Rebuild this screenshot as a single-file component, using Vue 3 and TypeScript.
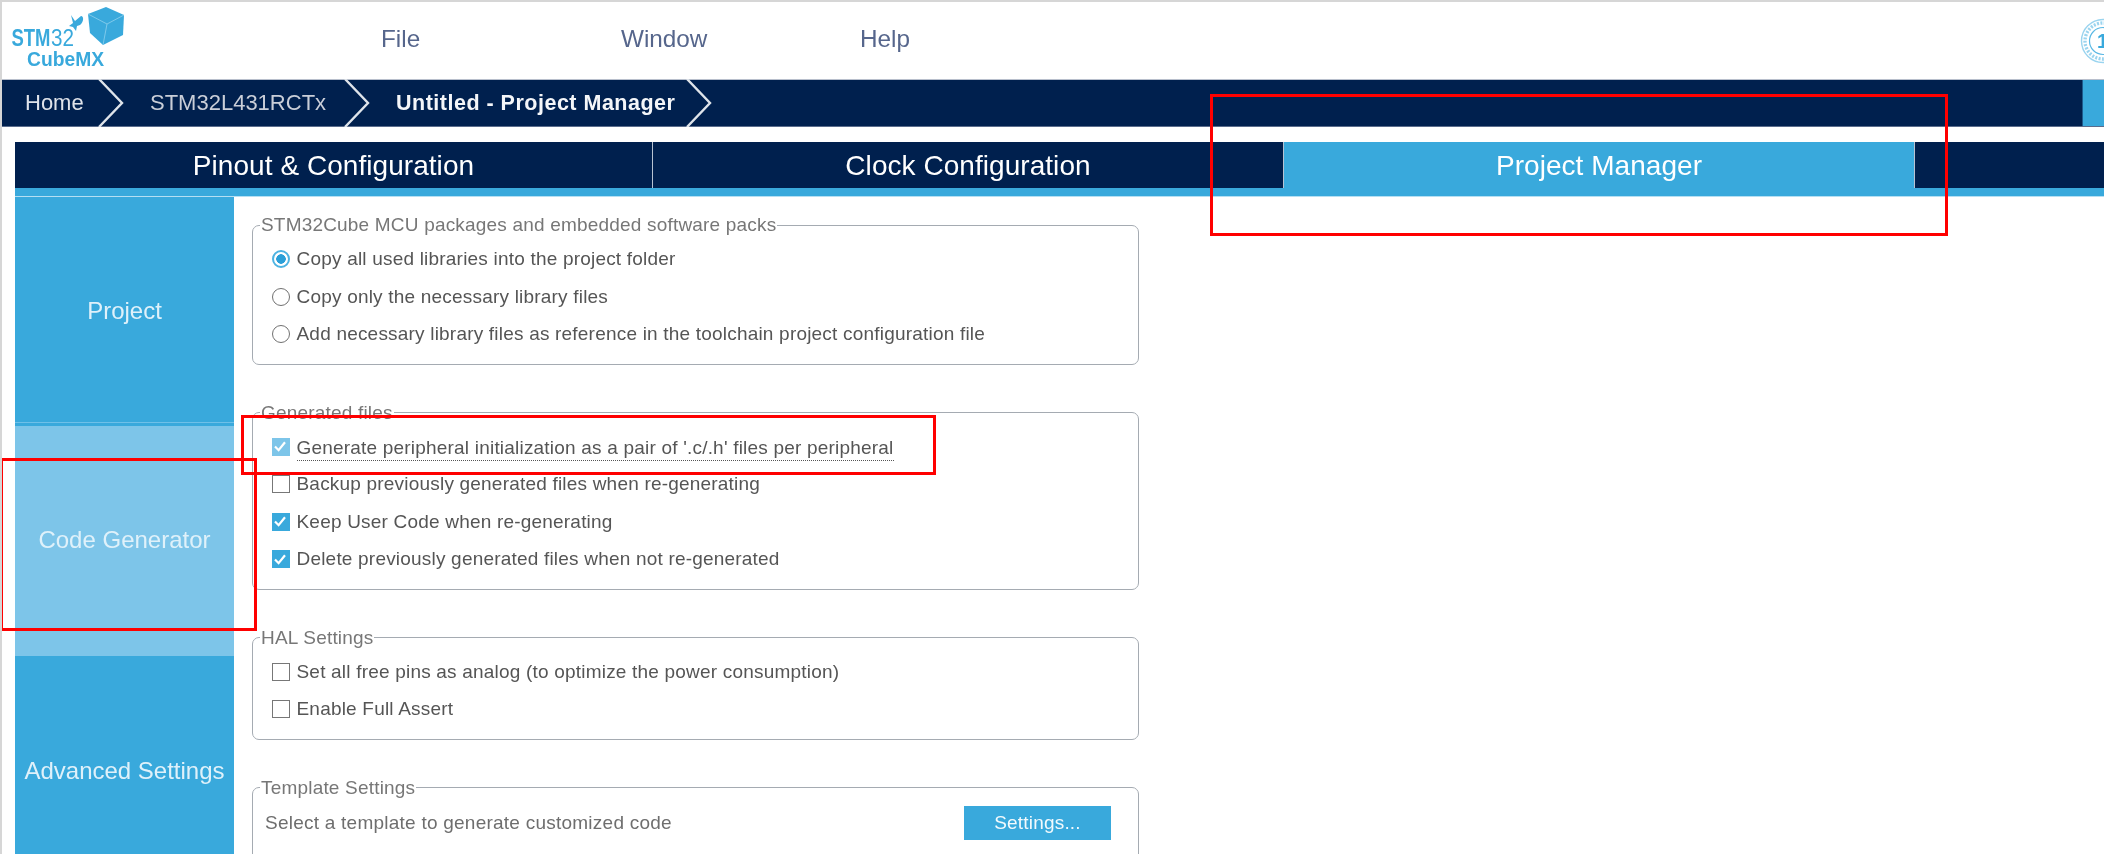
<script setup lang="ts">
type Row = { label: string; kind: 'radio' | 'check'; on?: boolean; soft?: boolean; tip?: boolean }

const menus: string[] = ['File', 'Window', 'Help']
const tabs = [
  { label: 'Pinout & Configuration', active: false },
  { label: 'Clock Configuration', active: false },
  { label: 'Project Manager', active: true },
]
const side = [
  { label: 'Project', cls: 'side-project' },
  { label: 'Code Generator', cls: 'side-code' },
  { label: 'Advanced Settings', cls: 'side-advanced' },
]
const groups: { title: string; rows: Row[] }[] = [
  {
    title: 'STM32Cube MCU packages and embedded software packs',
    rows: [
      { kind: 'radio', on: true, label: 'Copy all used libraries into the project folder' },
      { kind: 'radio', label: 'Copy only the necessary library files' },
      { kind: 'radio', label: 'Add necessary library files as reference in the toolchain project configuration file' },
    ],
  },
  {
    title: 'Generated files',
    rows: [
      { kind: 'check', on: true, soft: true, tip: true, label: "Generate peripheral initialization as a pair of '.c/.h' files per peripheral" },
      { kind: 'check', label: 'Backup previously generated files when re-generating' },
      { kind: 'check', on: true, label: 'Keep User Code when re-generating' },
      { kind: 'check', on: true, label: 'Delete previously generated files when not re-generated' },
    ],
  },
  {
    title: 'HAL Settings',
    rows: [
      { kind: 'check', label: 'Set all free pins as analog (to optimize the power consumption)' },
      { kind: 'check', label: 'Enable Full Assert' },
    ],
  },
]
</script>

<template>
  <div class="app">
    <header class="top soft-edge">
      <svg class="logo" viewBox="0 0 130 77" width="130" height="77">
        <text x="9.5" y="44" class="logo-strong" textLength="39" lengthAdjust="spacingAndGlyphs">STM</text>
        <text x="49" y="44" class="logo-thin" textLength="23" lengthAdjust="spacingAndGlyphs">32</text>
        <text x="25" y="64" class="logo-cube" textLength="77" lengthAdjust="spacingAndGlyphs">CubeMX</text>
        <path d="M86 12 104 5 122 13 121 33 101 43 88 31Z" fill="#39a9dc" />
        <path d="M86 12 105 22 122 13M105 22 101 43" fill="none" stroke="#8fd0ee" stroke-width="0.8" />
        <path d="M69 13 73 19 79 14C82 14 82 20 78 23L75 24 74 29 71 25 67 24 71 21Z" fill="#39a9dc" />
      </svg>
      <nav class="menu">
        <span v-for="m in menus" :key="m" class="menu-item">{{ m }}</span>
      </nav>
      <svg class="seal" viewBox="0 0 24 46" width="24" height="46">
        <circle cx="23" cy="23" r="21.5" fill="none" stroke="#9ad4ef" stroke-width="1.4" />
        <circle cx="23" cy="23" r="18" fill="none" stroke="#9ad4ef" stroke-width="3.4" stroke-dasharray="2 1.4" />
        <circle cx="23" cy="23" r="13.5" fill="none" stroke="#5ab8e4" stroke-width="1.2" />
        <text x="17" y="30" class="seal-num">1</text>
      </svg>
    </header>

    <div class="crumbs soft-edge">
      <div class="crumb crumb-home">
        <span>Home</span>
        <svg class="chev" viewBox="0 0 26 48" width="26" height="48"><path d="M1 0 24 24 1 48" /></svg>
      </div>
      <div class="crumb crumb-mcu">
        <span class="dim">STM32L431RCTx</span>
        <svg class="chev" viewBox="0 0 26 48" width="26" height="48"><path d="M1 0 24 24 1 48" /></svg>
      </div>
      <div class="crumb crumb-project">
        <strong>Untitled - Project Manager</strong>
        <svg class="chev" viewBox="0 0 26 48" width="26" height="48"><path d="M1 0 24 24 1 48" /></svg>
      </div>
      <div class="crumb-action"></div>
    </div>

    <div class="workspace soft-edge">
      <div class="tabs">
        <div v-for="t in tabs" :key="t.label" class="tab" :class="{ active: t.active }">{{ t.label }}</div>
        <div class="tab-rest"></div>
      </div>
      <div class="tab-accent"></div>

      <div class="panes">
        <aside class="side">
          <div v-for="s in side" :key="s.label" class="side-item" :class="s.cls">{{ s.label }}</div>
        </aside>

        <main class="settings">
          <fieldset v-for="g in groups" :key="g.title" class="group">
            <legend>{{ g.title }}</legend>
            <div v-for="r in g.rows" :key="r.label" class="row">
              <span v-if="r.kind === 'radio'" class="radio" :class="{ on: r.on }"></span>
              <span v-else class="check" :class="{ on: r.on, soft: r.soft }">
                <svg v-if="r.on" viewBox="0 0 18 18" width="18" height="18"><path d="M4 9.5 7.6 13.2 14 5.2" /></svg>
              </span>
              <span class="row-label" :class="{ tip: r.tip }">{{ r.label }}</span>
            </div>
          </fieldset>

          <fieldset class="group">
            <legend>Template Settings</legend>
            <div class="template">
              <span class="template-text">Select a template to generate customized code</span>
              <button class="settings-btn" type="button">Settings...</button>
            </div>
          </fieldset>
        </main>
      </div>
    </div>

    <div class="mark mark-tab"></div>
    <div class="mark mark-row"></div>
    <div class="mark mark-side"></div>
  </div>
</template>

<style>
html, body { margin: 0; background: #fff; overflow: hidden; }
</style>

<style scoped>
.app {
  position: relative;
  width: 2104px;
  height: 854px;
  box-sizing: border-box;
  overflow: hidden;
  background: #fff;
  border-top: 2px solid #d6d6d6;
  border-left: 2px solid #d6d6d6;
  font-family: "Liberation Sans", Arial, sans-serif;
}
.soft-edge { filter: blur(0.4px); }
.top {
  display: flex;
  align-items: center;
  height: 77px;
}
.logo { flex: none; }
.logo-strong { font: 700 24px "Liberation Sans", sans-serif; fill: #39a9dc; }
.logo-thin { font: 400 24px "Liberation Sans", sans-serif; fill: #39a9dc; }
.logo-cube { font: 700 20px "Liberation Sans", sans-serif; fill: #39a9dc; }
.menu {
  display: grid;
  grid-template-columns: 240px 239px auto;
  margin-left: 249px;
  padding-bottom: 3px;
}
.menu-item {
  font-size: 24.3px;
  font-weight: 400;
  color: #56668c;
}
.seal { flex: none; margin-left: auto; }
.seal-num { font: 700 20px "Liberation Sans", sans-serif; fill: #39a9dc; }

.crumbs {
  display: flex;
  height: 48px;
  box-sizing: border-box;
  background: #00204e;
  box-shadow: inset 0 1px 0 #b8bfcc, inset 0 -1px 0 #5a6c8c;
  color: #fff;
  font-size: 22px;
}
.crumb {
  display: flex;
  align-items: center;
  flex: none;
  box-sizing: border-box;
}
.crumb-home { width: 122px; padding-left: 23px; color: #dfe3ea; }
.crumb-mcu { width: 246px; padding-left: 26px; }
.crumb-project { width: 342px; padding-left: 26px; }
.dim { color: #c9ced8; }
.crumb strong { font-size: 21.5px; font-weight: 700; color: #f4f6f9; letter-spacing: 0.5px; }
.chev { flex: none; margin-left: auto; }
.chev path { fill: none; stroke: #dfe4ea; stroke-width: 2.4; }
.crumb-action {
  flex: none;
  width: 22px;
  height: 46px;
  margin: 1px 0 1px auto;
  box-sizing: border-box;
  background: #39a9dc;
  border-left: 1px solid #1d5a8c;
}

.workspace {
  display: flex;
  flex-direction: column;
  padding: 15px 0 0 13px;
}
.tabs {
  display: flex;
  height: 46px;
  background: #00204e;
}
.tab {
  flex: none;
  width: 638px;
  display: flex;
  align-items: center;
  justify-content: center;
  box-sizing: border-box;
  border-right: 1px solid #b8c3d2;
  color: #fff;
  font-size: 28px;
  letter-spacing: 0.05px;
  padding-top: 1px;
}
.tab:nth-child(2) { width: 631px; }
.tab:nth-child(3) { width: 631px; }
.tab.active { background: #39a9dc; }
.tab-rest { flex: 1; }
.tab-accent {
  height: 8px;
  background: #39a9dc;
  border-bottom: 1px solid #b5dff3;
}

.panes { display: flex; align-items: flex-start; }
.side { flex: none; width: 219px; }
.side-item {
  display: flex;
  align-items: center;
  justify-content: center;
  box-sizing: border-box;
  font-size: 24px;
  color: #dff1fa;
  background: #39a9dc;
}
.side-project { height: 226px; border-bottom: 1px solid #6fc0e8; padding-top: 2px; }
.side-code { height: 233px; background: #7dc5e9; border-top: 3px solid #39a9dc; padding-bottom: 3px; }
.side-advanced { height: 229px; }

.settings {
  flex: none;
  width: 887px;
  margin-left: 18px;
  padding-top: 17px;
  display: flex;
  flex-direction: column;
  gap: 36.5px;
}
.group {
  margin: 0;
  padding: 4.5px 0 11px 18.5px;
  min-width: 0;
  border: 1.5px solid #a5abb2;
  border-radius: 7px;
  color: #555;
  font-size: 19px;
}
.group legend {
  margin-left: -11.5px;
  padding: 0 1px;
  line-height: 22px;
  color: #777;
  letter-spacing: 0.19px;
}
.row {
  display: flex;
  align-items: center;
  height: 37.5px;
}
.row-label { margin-left: 7px; letter-spacing: 0.2px; }
.row-label.tip { border-bottom: 1px dotted #555; padding: 3px 0 1px; margin-bottom: -2px; }
.radio {
  flex: none;
  box-sizing: border-box;
  width: 18px;
  height: 18px;
  border-radius: 50%;
  border: 1.5px solid #707070;
  background: #fff;
}
.radio.on {
  border: 2px solid #4db3e2;
  background: radial-gradient(circle, #2b9fd8 0 4.5px, #fff 5px);
}
.check {
  flex: none;
  box-sizing: border-box;
  width: 18px;
  height: 18px;
  border: 1.5px solid #777;
  background: #fff;
}
.check svg { display: block; margin: -1.5px; }
.check path { fill: none; stroke: #fff; stroke-width: 2.2; }
.check.on { background: #39a9dc; border-color: #39a9dc; }
.check.soft { background: #7dc5e9; border-color: #7dc5e9; }
.template {
  display: flex;
  align-items: center;
  height: 34px;
  margin-top: 2.5px;
  padding-bottom: 60px;
}
.template-text {
  margin-left: -6.5px;
  color: #6e6e6e;
  letter-spacing: 0.24px;
}
.settings-btn {
  margin-left: auto;
  margin-right: 27px;
  width: 147px;
  height: 34px;
  border: 0;
  padding: 0;
  background: #39a9dc;
  color: #f2fafd;
  font: 19px "Liberation Sans", sans-serif;
  letter-spacing: 0.2px;
}

.mark {
  position: absolute;
  box-sizing: border-box;
  border: 3px solid #f00;
  pointer-events: none;
}
.mark-tab { left: 1208px; top: 92px; width: 738px; height: 142px; }
.mark-row { left: 239px; top: 413px; width: 695px; height: 60px; }
.mark-side { left: -2px; top: 456px; width: 257px; height: 173px; }
</style>
